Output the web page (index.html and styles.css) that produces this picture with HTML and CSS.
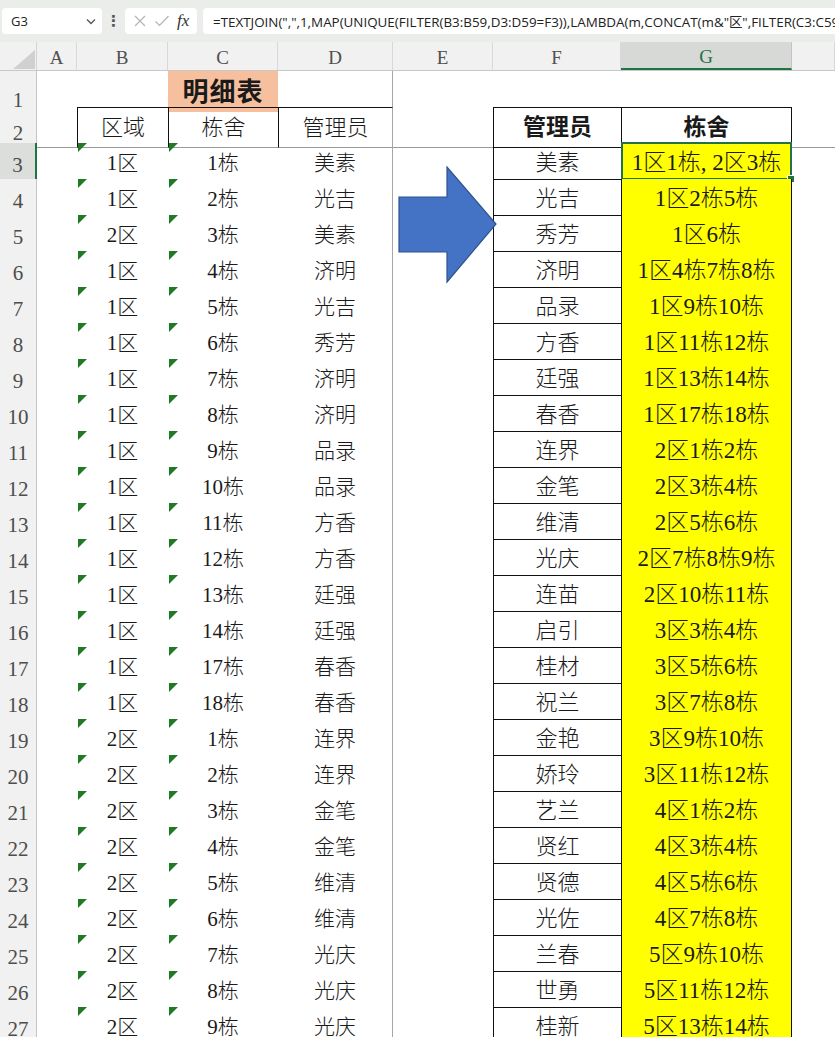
FILE: index.html
```html
<!DOCTYPE html>
<html lang="zh-CN">
<head>
<meta charset="utf-8">
<title>明细表</title>
<link rel="stylesheet" href="styles.css">
</head>
<body>
<div class="app">
  <div class="fbar">
    <div class="namebox"><span>G3</span>
      <svg class="chev" width="10" height="7" viewBox="0 0 10 7"><path d="M1 1.5 L5 5.5 L9 1.5" fill="none" stroke="#555" stroke-width="1.3"/></svg>
    </div>
    <div class="dots">⋮</div>
    <div class="fxbox">
      <svg width="14" height="14" viewBox="0 0 14 14"><path d="M2 2 L12 12 M12 2 L2 12" stroke="#b4b4b4" stroke-width="1.2" fill="none"/></svg>
      <svg width="16" height="14" viewBox="0 0 16 14"><path d="M1.5 7.5 L5.5 11.5 L14.5 2" stroke="#b4b4b4" stroke-width="1.2" fill="none"/></svg>
      <span class="fx">fx</span>
    </div>
    <div class="formula">=TEXTJOIN(",",1,MAP(UNIQUE(FILTER(B3:B59,D3:D59=F3)),LAMBDA(m,CONCAT(m&amp;"区",FILTER(C3:C59</div>
  </div>

  <div class="sheet">
    <div class="row colhead">
      <div class="corner"><svg width="30" height="24" viewBox="0 0 30 24"><path d="M29 4 L29 23 L7 23 Z" fill="#d0d0d0"/></svg></div>
      <div class="ch">A</div><div class="ch">B</div><div class="ch">C</div><div class="ch">D</div><div class="ch">E</div><div class="ch">F</div><div class="ch ch-sel">G</div><div class="ch"></div>
    </div>

    <div class="row">
      <div class="rh">1</div><div class="cell"></div><div class="cell"></div><div class="cell title">明细表</div><div class="cell d"></div><div class="cell"></div><div class="cell"></div><div class="cell"></div><div class="cell"></div>
    </div>

    <div class="row r2">
      <div class="rh">2</div><div class="cell"></div><div class="cell lh">区域</div><div class="cell lh">栋舍</div><div class="cell lh d">管理员</div><div class="cell"></div><div class="cell f hd">管理员</div><div class="cell g hd">栋舍</div><div class="cell"></div>
    </div>

    <div class="row"><div class="rh rh-sel">3</div><div class="cell"></div><div class="cell tri">1区</div><div class="cell tri">1栋</div><div class="cell d">美素</div><div class="cell"></div><div class="cell f">美素</div><div class="cell g sel">1区1栋, 2区3栋</div><div class="cell"></div></div>
    <div class="row"><div class="rh">4</div><div class="cell"></div><div class="cell tri">1区</div><div class="cell tri">2栋</div><div class="cell d">光吉</div><div class="cell"></div><div class="cell f">光吉</div><div class="cell g">1区2栋5栋</div><div class="cell"></div></div>
    <div class="row"><div class="rh">5</div><div class="cell"></div><div class="cell tri">2区</div><div class="cell tri">3栋</div><div class="cell d">美素</div><div class="cell"></div><div class="cell f">秀芳</div><div class="cell g">1区6栋</div><div class="cell"></div></div>
    <div class="row"><div class="rh">6</div><div class="cell"></div><div class="cell tri">1区</div><div class="cell tri">4栋</div><div class="cell d">济明</div><div class="cell"></div><div class="cell f">济明</div><div class="cell g">1区4栋7栋8栋</div><div class="cell"></div></div>
    <div class="row"><div class="rh">7</div><div class="cell"></div><div class="cell tri">1区</div><div class="cell tri">5栋</div><div class="cell d">光吉</div><div class="cell"></div><div class="cell f">品录</div><div class="cell g">1区9栋10栋</div><div class="cell"></div></div>
    <div class="row"><div class="rh">8</div><div class="cell"></div><div class="cell tri">1区</div><div class="cell tri">6栋</div><div class="cell d">秀芳</div><div class="cell"></div><div class="cell f">方香</div><div class="cell g">1区11栋12栋</div><div class="cell"></div></div>
    <div class="row"><div class="rh">9</div><div class="cell"></div><div class="cell tri">1区</div><div class="cell tri">7栋</div><div class="cell d">济明</div><div class="cell"></div><div class="cell f">廷强</div><div class="cell g">1区13栋14栋</div><div class="cell"></div></div>
    <div class="row"><div class="rh">10</div><div class="cell"></div><div class="cell tri">1区</div><div class="cell tri">8栋</div><div class="cell d">济明</div><div class="cell"></div><div class="cell f">春香</div><div class="cell g">1区17栋18栋</div><div class="cell"></div></div>
    <div class="row"><div class="rh">11</div><div class="cell"></div><div class="cell tri">1区</div><div class="cell tri">9栋</div><div class="cell d">品录</div><div class="cell"></div><div class="cell f">连界</div><div class="cell g">2区1栋2栋</div><div class="cell"></div></div>
    <div class="row"><div class="rh">12</div><div class="cell"></div><div class="cell tri">1区</div><div class="cell tri">10栋</div><div class="cell d">品录</div><div class="cell"></div><div class="cell f">金笔</div><div class="cell g">2区3栋4栋</div><div class="cell"></div></div>
    <div class="row"><div class="rh">13</div><div class="cell"></div><div class="cell tri">1区</div><div class="cell tri">11栋</div><div class="cell d">方香</div><div class="cell"></div><div class="cell f">维清</div><div class="cell g">2区5栋6栋</div><div class="cell"></div></div>
    <div class="row"><div class="rh">14</div><div class="cell"></div><div class="cell tri">1区</div><div class="cell tri">12栋</div><div class="cell d">方香</div><div class="cell"></div><div class="cell f">光庆</div><div class="cell g">2区7栋8栋9栋</div><div class="cell"></div></div>
    <div class="row"><div class="rh">15</div><div class="cell"></div><div class="cell tri">1区</div><div class="cell tri">13栋</div><div class="cell d">廷强</div><div class="cell"></div><div class="cell f">连苗</div><div class="cell g">2区10栋11栋</div><div class="cell"></div></div>
    <div class="row"><div class="rh">16</div><div class="cell"></div><div class="cell tri">1区</div><div class="cell tri">14栋</div><div class="cell d">廷强</div><div class="cell"></div><div class="cell f">启引</div><div class="cell g">3区3栋4栋</div><div class="cell"></div></div>
    <div class="row"><div class="rh">17</div><div class="cell"></div><div class="cell tri">1区</div><div class="cell tri">17栋</div><div class="cell d">春香</div><div class="cell"></div><div class="cell f">桂材</div><div class="cell g">3区5栋6栋</div><div class="cell"></div></div>
    <div class="row"><div class="rh">18</div><div class="cell"></div><div class="cell tri">1区</div><div class="cell tri">18栋</div><div class="cell d">春香</div><div class="cell"></div><div class="cell f">祝兰</div><div class="cell g">3区7栋8栋</div><div class="cell"></div></div>
    <div class="row"><div class="rh">19</div><div class="cell"></div><div class="cell tri">2区</div><div class="cell tri">1栋</div><div class="cell d">连界</div><div class="cell"></div><div class="cell f">金艳</div><div class="cell g">3区9栋10栋</div><div class="cell"></div></div>
    <div class="row"><div class="rh">20</div><div class="cell"></div><div class="cell tri">2区</div><div class="cell tri">2栋</div><div class="cell d">连界</div><div class="cell"></div><div class="cell f">娇玲</div><div class="cell g">3区11栋12栋</div><div class="cell"></div></div>
    <div class="row"><div class="rh">21</div><div class="cell"></div><div class="cell tri">2区</div><div class="cell tri">3栋</div><div class="cell d">金笔</div><div class="cell"></div><div class="cell f">艺兰</div><div class="cell g">4区1栋2栋</div><div class="cell"></div></div>
    <div class="row"><div class="rh">22</div><div class="cell"></div><div class="cell tri">2区</div><div class="cell tri">4栋</div><div class="cell d">金笔</div><div class="cell"></div><div class="cell f">贤红</div><div class="cell g">4区3栋4栋</div><div class="cell"></div></div>
    <div class="row"><div class="rh">23</div><div class="cell"></div><div class="cell tri">2区</div><div class="cell tri">5栋</div><div class="cell d">维清</div><div class="cell"></div><div class="cell f">贤德</div><div class="cell g">4区5栋6栋</div><div class="cell"></div></div>
    <div class="row"><div class="rh">24</div><div class="cell"></div><div class="cell tri">2区</div><div class="cell tri">6栋</div><div class="cell d">维清</div><div class="cell"></div><div class="cell f">光佐</div><div class="cell g">4区7栋8栋</div><div class="cell"></div></div>
    <div class="row"><div class="rh">25</div><div class="cell"></div><div class="cell tri">2区</div><div class="cell tri">7栋</div><div class="cell d">光庆</div><div class="cell"></div><div class="cell f">兰春</div><div class="cell g">5区9栋10栋</div><div class="cell"></div></div>
    <div class="row"><div class="rh">26</div><div class="cell"></div><div class="cell tri">2区</div><div class="cell tri">8栋</div><div class="cell d">光庆</div><div class="cell"></div><div class="cell f">世勇</div><div class="cell g">5区11栋12栋</div><div class="cell"></div></div>
    <div class="row"><div class="rh">27</div><div class="cell"></div><div class="cell tri">2区</div><div class="cell tri">9栋</div><div class="cell d">光庆</div><div class="cell"></div><div class="cell f">桂新</div><div class="cell g">5区13栋14栋</div><div class="cell"></div></div>
  </div>

  <svg class="arrow" width="102" height="120" viewBox="0 0 102 120">
    <path d="M1 31 L49 31 L49 1 L98 58 L49 116 L49 86 L1 86 Z" fill="#4472c4" stroke="#2f528f" stroke-width="1.2"/>
  </svg>
</div>
</body>
</html>
```

FILE: styles.css
```css
html, body {
  margin: 0;
  padding: 0;
  background: #ffffff;
}
body {
  width: 835px;
  height: 1037px;
  overflow: hidden;
  font-family: "Liberation Serif", "Noto Sans CJK SC", serif;
  color: #1a1a1a;
}
.app {
  position: relative;
  width: 835px;
  height: 1037px;
  overflow: hidden;
}

/* formula bar */
.fbar {
  height: 42px;
  background: #eaede9;
  display: flex;
  align-items: center;
  padding-left: 2px;
  box-sizing: border-box;
}
.namebox {
  width: 100px;
  height: 26px;
  background: #fff;
  border-radius: 4px;
  display: flex;
  align-items: center;
  justify-content: space-between;
  padding: 0 6px 0 9px;
  box-sizing: border-box;
  font: 13px "Open Sans", "Noto Sans", sans-serif;
  color: #222;
}
.dots {
  width: 23px;
  text-align: center;
  font: bold 15px "DejaVu Sans", sans-serif;
  color: #555;
}
.fxbox {
  width: 72px;
  height: 26px;
  background: #fff;
  border-radius: 4px;
  display: flex;
  align-items: center;
  justify-content: space-around;
  padding: 0 4px;
  box-sizing: border-box;
}
.fx {
  font: italic 17px "Liberation Serif", serif;
  color: #333;
}
.formula {
  flex: 1;
  margin-left: 6px;
  height: 26px;
  background: #fff;
  border-radius: 4px 0 0 4px;
  padding-left: 10px;
  display: flex;
  align-items: center;
  white-space: nowrap;
  overflow: hidden;
  font: 13.4px "Open Sans", "Noto Sans CJK SC", sans-serif;
  color: #222;
}

/* grid */
.row {
  display: grid;
  grid-template-columns: 37px 40px 91px 110px 115px 100px 128px 171px 1fr;
  height: 36px;
}
.colhead {
  height: 28px;
  background: #f1f1f1;
  border-bottom: 1px solid #c9c9c9;
  box-sizing: content-box;
}
.corner {
  border-right: 1px solid #d4d4d4;
  display: flex;
  align-items: flex-end;
  justify-content: flex-end;
  box-sizing: border-box;
}
.ch {
  border-right: 1px solid #d8d8d8;
  display: flex;
  align-items: center;
  justify-content: center;
  padding-top: 3px;
  box-sizing: border-box;
  font: 19px "Liberation Serif", serif;
  color: #505050;
}
.ch-sel {
  background: #d6d9d6;
  color: #217346;
  border-bottom: 2px solid #217346;
  border-right-color: #c4c4c4;
}

.rh {
  background: #f1f1f1;
  border-right: 1px solid #c6c6c6;
  border-bottom: 1px solid #dedede;
  display: flex;
  align-items: flex-end;
  justify-content: center;
  padding-bottom: 1px;
  box-sizing: border-box;
  font: 21px "Liberation Serif", serif;
  color: #4d4d4d;
}
.rh-sel {
  background: #dcdedc;
  border-right: 2px solid #217346;
}

.cell {
  position: relative;
  display: flex;
  align-items: center;
  justify-content: center;
  padding-bottom: 2px;
  box-sizing: border-box;
  font-size: 21px;
  font-weight: 300;
  white-space: nowrap;
}
.d {
  border-right: 1px solid #a6a6a6;
}

.title {
  background: #f6c09f;
  font-size: 26px;
  font-weight: bold;
  letter-spacing: 1px;
  border-bottom: 3px solid #ffffff;
  padding-bottom: 4px;
}

.r2 > .cell, .r2 > .rh {
  border-bottom: 1px solid #9a9a9a;
}
.r2 > .cell {
  padding-bottom: 5px;
}
.r2 > .lh {
  border-top: 1px solid #111;
  border-left: 1px solid #111;
  font-size: 22px;
}

.f {
  border-left: 1px solid #111;
  border-bottom: 1px solid #111;
  font-size: 22px;
}
.g {
  border-left: 1px solid #111;
  border-right: 1px solid #111;
  border-bottom: 1px solid #111;
  background: #ffff00;
  font-size: 23px;
}
.r2 > .f, .r2 > .g {
  border-top: 1px solid #111;
  border-bottom: 1px solid #111;
}
.hd {
  background: #ffffff;
  font-weight: bold;
  font-size: 23px;
}

.tri::before {
  content: "";
  position: absolute;
  left: 1px;
  top: 0;
  width: 0;
  height: 0;
  border-top: 9px solid #1f7a24;
  border-right: 9px solid transparent;
}

.sel::before {
  content: "";
  position: absolute;
  left: -1px;
  top: -1px;
  right: -1px;
  bottom: -1px;
  border: 2px solid #217346;
}
.sel::after {
  content: "";
  position: absolute;
  right: -4px;
  bottom: -4px;
  width: 6px;
  height: 6px;
  background: #217346;
  border: 1px solid #ffffff;
}

.arrow {
  position: absolute;
  left: 398px;
  top: 166px;
}
```
